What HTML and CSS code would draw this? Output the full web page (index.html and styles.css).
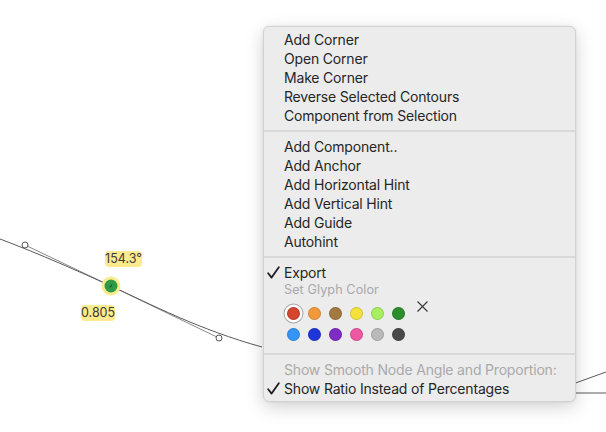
FILE: index.html
```html
<!DOCTYPE html>
<html>
<head>
<meta charset="utf-8">
<link rel="stylesheet" href="styles.css">
</head>
<body>
<div class="stage">
  <svg class="canvas" width="606" height="432" viewBox="0 0 606 432">
    <line x1="25" y1="245" x2="111" y2="286" class="handle"/>
    <line x1="111" y1="286" x2="219" y2="338" class="handle"/>
    <path d="M0,239 C40,254 80,272 111,286 C150,304 200,330 262,347" class="curve"/>
    <path d="M570,385 L606,372" class="curve"/>
    <path d="M570,393 L606,393" class="curve"/>
    <circle cx="25" cy="245" r="3" class="hpt"/>
    <circle cx="219" cy="338" r="3" class="hpt"/>
    <circle cx="111" cy="286" r="9.5" class="halo"/>
    <circle cx="111" cy="286" r="6.5" class="node"/>
    <line x1="110" y1="287.5" x2="112" y2="284.5" class="tick"/>
  </svg>
  <div class="tag tag-angle">154.3°</div>
  <div class="tag tag-ratio">0.805</div>

  <div class="menu">
    <div class="item"><span class="chk"></span>Add Corner</div>
    <div class="item"><span class="chk"></span>Open Corner</div>
    <div class="item"><span class="chk"></span>Make Corner</div>
    <div class="item"><span class="chk"></span>Reverse Selected Contours</div>
    <div class="item"><span class="chk"></span>Component from Selection</div>
    <div class="sep"></div>
    <div class="item"><span class="chk"></span>Add Component..</div>
    <div class="item"><span class="chk"></span>Add Anchor</div>
    <div class="item"><span class="chk"></span>Add Horizontal Hint</div>
    <div class="item"><span class="chk"></span>Add Vertical Hint</div>
    <div class="item"><span class="chk"></span>Add Guide</div>
    <div class="item"><span class="chk"></span>Autohint</div>
    <div class="sep"></div>
    <div class="item"><span class="chk"><svg width="13" height="13" viewBox="0 0 13 13"><path d="M1.2,7.2 L4.6,11.6 L11.8,1.2" /></svg></span>Export</div>
    <div class="label">Set Glyph Color</div>
    <div class="colors">
      <div class="grid">
        <span class="sw sel" style="background:#d5462e"></span>
        <span class="sw" style="background:#f4993b"></span>
        <span class="sw" style="background:#a37943"></span>
        <span class="sw" style="background:#f3e23c"></span>
        <span class="sw" style="background:#a7ee60"></span>
        <span class="sw" style="background:#2c8e2d"></span>
        <span class="sw" style="background:#3595f6"></span>
        <span class="sw" style="background:#1f36d9"></span>
        <span class="sw" style="background:#7f2bc6"></span>
        <span class="sw" style="background:#ef57a2"></span>
        <span class="sw" style="background:#b9b9b9"></span>
        <span class="sw" style="background:#494949"></span>
      </div>
      <svg class="clear" width="11" height="11" viewBox="0 0 11 11"><path d="M0.5,0.5 L10.5,10.5 M10.5,0.5 L0.5,10.5"/></svg>
    </div>
    <div class="sep"></div>
    <div class="item dis"><span class="chk"></span>Show Smooth Node Angle and Proportion:</div>
    <div class="item"><span class="chk"><svg width="13" height="13" viewBox="0 0 13 13"><path d="M1.2,7.2 L4.6,11.6 L11.8,1.2" /></svg></span>Show Ratio Instead of Percentages</div>
  </div>
</div>
</body>
</html>
```
FILE: styles.css
```css
html, body {
  margin: 0;
  padding: 0;
  background: #ffffff;
}
.stage {
  position: relative;
  width: 606px;
  height: 432px;
  overflow: hidden;
  font-family: Inter, "Noto Sans", sans-serif;
}
.canvas {
  position: absolute;
  left: 0;
  top: 0;
}
.curve {
  fill: none;
  stroke: #5a5a5a;
  stroke-width: 1;
}
.handle {
  stroke: #8a8a8a;
  stroke-width: 1;
}
.hpt {
  fill: #ffffff;
  stroke: #555555;
  stroke-width: 1;
}
.halo {
  fill: #f8ec8c;
}
.node {
  fill: #2e9a47;
}
.tick {
  stroke: #1c3b22;
  stroke-width: 1;
}
.tag {
  position: absolute;
  background: #fcea8c;
  color: #3a3a3a;
  font-size: 12.5px;
  line-height: 16px;
  height: 16px;
  border-radius: 4px;
  box-sizing: border-box;
  text-align: center;
  white-space: nowrap;
}
.tag-angle {
  left: 105px;
  top: 251px;
  width: 37px;
}
.tag-ratio {
  left: 81px;
  top: 305px;
  width: 34px;
}
.menu {
  position: absolute;
  left: 263px;
  top: 26px;
  width: 313px;
  height: 376px;
  box-sizing: border-box;
  background: #ececec;
  border: 1px solid #d2d2d2;
  border-radius: 6px;
  box-shadow: 0 5px 18px rgba(0, 0, 0, 0.18), 0 0 3px rgba(0, 0, 0, 0.08);
  padding-top: 3px;
  display: flex;
  flex-direction: column;
}
.item {
  display: flex;
  align-items: center;
  height: 19px;
  font-size: 14px;
  letter-spacing: -0.18px;
  color: #262626;
  padding-left: 3px;
  white-space: nowrap;
}
.item.dis {
  color: #aaaaaa;
}
.chk {
  width: 17px;
  flex: none;
  display: flex;
  align-items: center;
}
.chk svg path {
  fill: none;
  stroke: #1e1e1e;
  stroke-width: 1.8;
  stroke-linecap: round;
  stroke-linejoin: round;
}
.sep {
  height: 2px;
  background: #d9d9d9;
  margin: 5px 0;
  flex: none;
}
.label {
  height: 16px;
  line-height: 16px;
  font-size: 12.6px;
  letter-spacing: 0.1px;
  color: #a9a9a9;
  padding-left: 20px;
}
.colors {
  display: flex;
  align-items: flex-start;
  padding: 9px 0 7px 22.5px;
}
.grid {
  display: grid;
  grid-template-columns: repeat(6, 13px);
  grid-auto-rows: 13px;
  column-gap: 8.2px;
  row-gap: 8px;
}
.sw {
  display: block;
  width: 13px;
  height: 13px;
  border-radius: 50%;
  box-shadow: inset 0 0 0 1px rgba(0, 0, 0, 0.14);
}
.sw.sel {
  box-shadow: inset 0 0 0 1px rgba(0, 0, 0, 0.14), 0 0 0 2.5px #ffffff, 0 0 0 3.5px #a8a8a8;
}
.clear {
  margin-left: 12px;
  margin-top: -6.5px;
}
.clear path {
  fill: none;
  stroke: #3c3c3c;
  stroke-width: 1.2;
}
```
